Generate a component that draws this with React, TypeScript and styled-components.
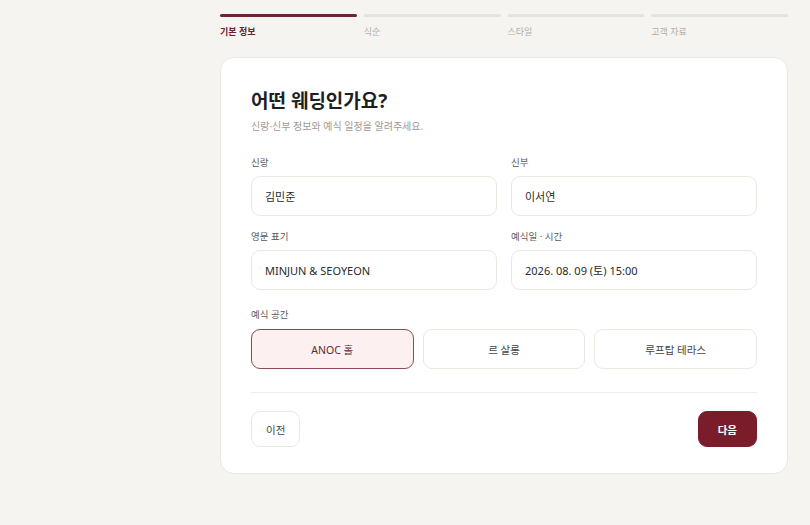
import styled, { createGlobalStyle } from "styled-components";

const GlobalStyle = createGlobalStyle`
  html, body {
    margin: 0;
    padding: 0;
    background: #f6f4f0;
    font-family: "Noto Sans", "Noto Sans CJK KR", sans-serif;
    color: #222;
  }
  * { box-sizing: border-box; }
`;

const Page = styled.div`
  width: 810px;
  height: 525px;
  padding: 14px 22px 0 220px;
  overflow: hidden;
`;

const Steps = styled.div`
  display: grid;
  grid-template-columns: repeat(4, 1fr);
  gap: 7px;
  margin-bottom: 19px;
`;

const Step = styled.div<{ $active?: boolean }>`
  display: flex;
  flex-direction: column;
  gap: 9px;
  font-size: 9px;
  line-height: 12px;
  color: ${(p) => (p.$active ? "#6b2230" : "#b3aea8")};
  font-weight: ${(p) => (p.$active ? 700 : 400)};

  &::before {
    content: "";
    display: block;
    height: 3px;
    border-radius: 2px;
    background: ${(p) => (p.$active ? "#6e2533" : "#e6e2dc")};
  }
`;

const Card = styled.div`
  background: #fff;
  border: 1px solid #ece8e2;
  border-radius: 14px;
  padding: 30px 30px 26px 30px;
`;

const Title = styled.h1`
  margin: 0;
  font-size: 19px;
  line-height: 26px;
  font-weight: 700;
  color: #1f1f1f;
`;

const Sub = styled.p`
  margin: 5px 0 23px;
  font-size: 10px;
  line-height: 14px;
  color: #a09a94;
`;

const Grid = styled.div`
  display: grid;
  grid-template-columns: 1fr 1fr;
  column-gap: 14px;
  row-gap: 14px;
`;

const Field = styled.div`
  display: flex;
  flex-direction: column;
  gap: 7px;
`;

const Label = styled.div`
  font-size: 9.5px;
  line-height: 13px;
  color: #5a5a5a;
`;

const Input = styled.div`
  height: 40px;
  border: 1px solid #ece8e2;
  border-radius: 9px;
  padding: 0 13px;
  display: flex;
  align-items: center;
  font-size: 11px;
  color: #2a2a2a;
`;

const Venue = styled.div`
  margin-top: 18px;
  display: flex;
  flex-direction: column;
  gap: 8px;
`;

const Options = styled.div`
  display: grid;
  grid-template-columns: repeat(3, 1fr);
  gap: 9px;
`;

const Option = styled.div<{ $selected?: boolean }>`
  height: 40px;
  border-radius: 9px;
  border: 1px solid ${(p) => (p.$selected ? "#8a4b55" : "#ece8e2")};
  background: ${(p) => (p.$selected ? "#fdf0f0" : "#fff")};
  display: flex;
  align-items: center;
  justify-content: center;
  font-size: 10.5px;
  color: ${(p) => (p.$selected ? "#5a2a32" : "#444")};
`;

const Divider = styled.div`
  height: 1px;
  background: #f0ece7;
  margin: 23px 0 18px;
`;

const Footer = styled.div`
  display: flex;
  justify-content: space-between;
  align-items: center;
`;

const Button = styled.button<{ $primary?: boolean }>`
  height: 36px;
  padding: 0 ${(p) => (p.$primary ? "19px" : "14px")};
  border-radius: 9px;
  font-family: inherit;
  font-size: 10.5px;
  font-weight: ${(p) => (p.$primary ? 700 : 400)};
  border: 1px solid ${(p) => (p.$primary ? "#7a1c2a" : "#ece8e2")};
  background: ${(p) => (p.$primary ? "#7a1c2a" : "#fff")};
  color: ${(p) => (p.$primary ? "#fff" : "#444")};
  cursor: pointer;
`;

const steps = ["기본 정보", "식순", "스타일", "고객 자료"];

const fields = [
  { label: "신랑", value: "김민준" },
  { label: "신부", value: "이서연" },
  { label: "영문 표기", value: "MINJUN & SEOYEON" },
  { label: "예식일 · 시간", value: "2026. 08. 09 (토) 15:00" },
];

const venues = ["ANOC 홀", "르 살롱", "루프탑 테라스"];

export default function App() {
  return (
    <>
      <GlobalStyle />
      <Page>
        <Steps>
          {steps.map((s, i) => (
            <Step key={s} $active={i === 0}>
              {s}
            </Step>
          ))}
        </Steps>
        <Card>
          <Title>어떤 웨딩인가요?</Title>
          <Sub>신랑·신부 정보와 예식 일정을 알려주세요.</Sub>
          <Grid>
            {fields.map((f) => (
              <Field key={f.label}>
                <Label>{f.label}</Label>
                <Input>{f.value}</Input>
              </Field>
            ))}
          </Grid>
          <Venue>
            <Label>예식 공간</Label>
            <Options>
              {venues.map((v, i) => (
                <Option key={v} $selected={i === 0}>
                  {v}
                </Option>
              ))}
            </Options>
          </Venue>
          <Divider />
          <Footer>
            <Button>이전</Button>
            <Button $primary>다음</Button>
          </Footer>
        </Card>
      </Page>
    </>
  );
}
